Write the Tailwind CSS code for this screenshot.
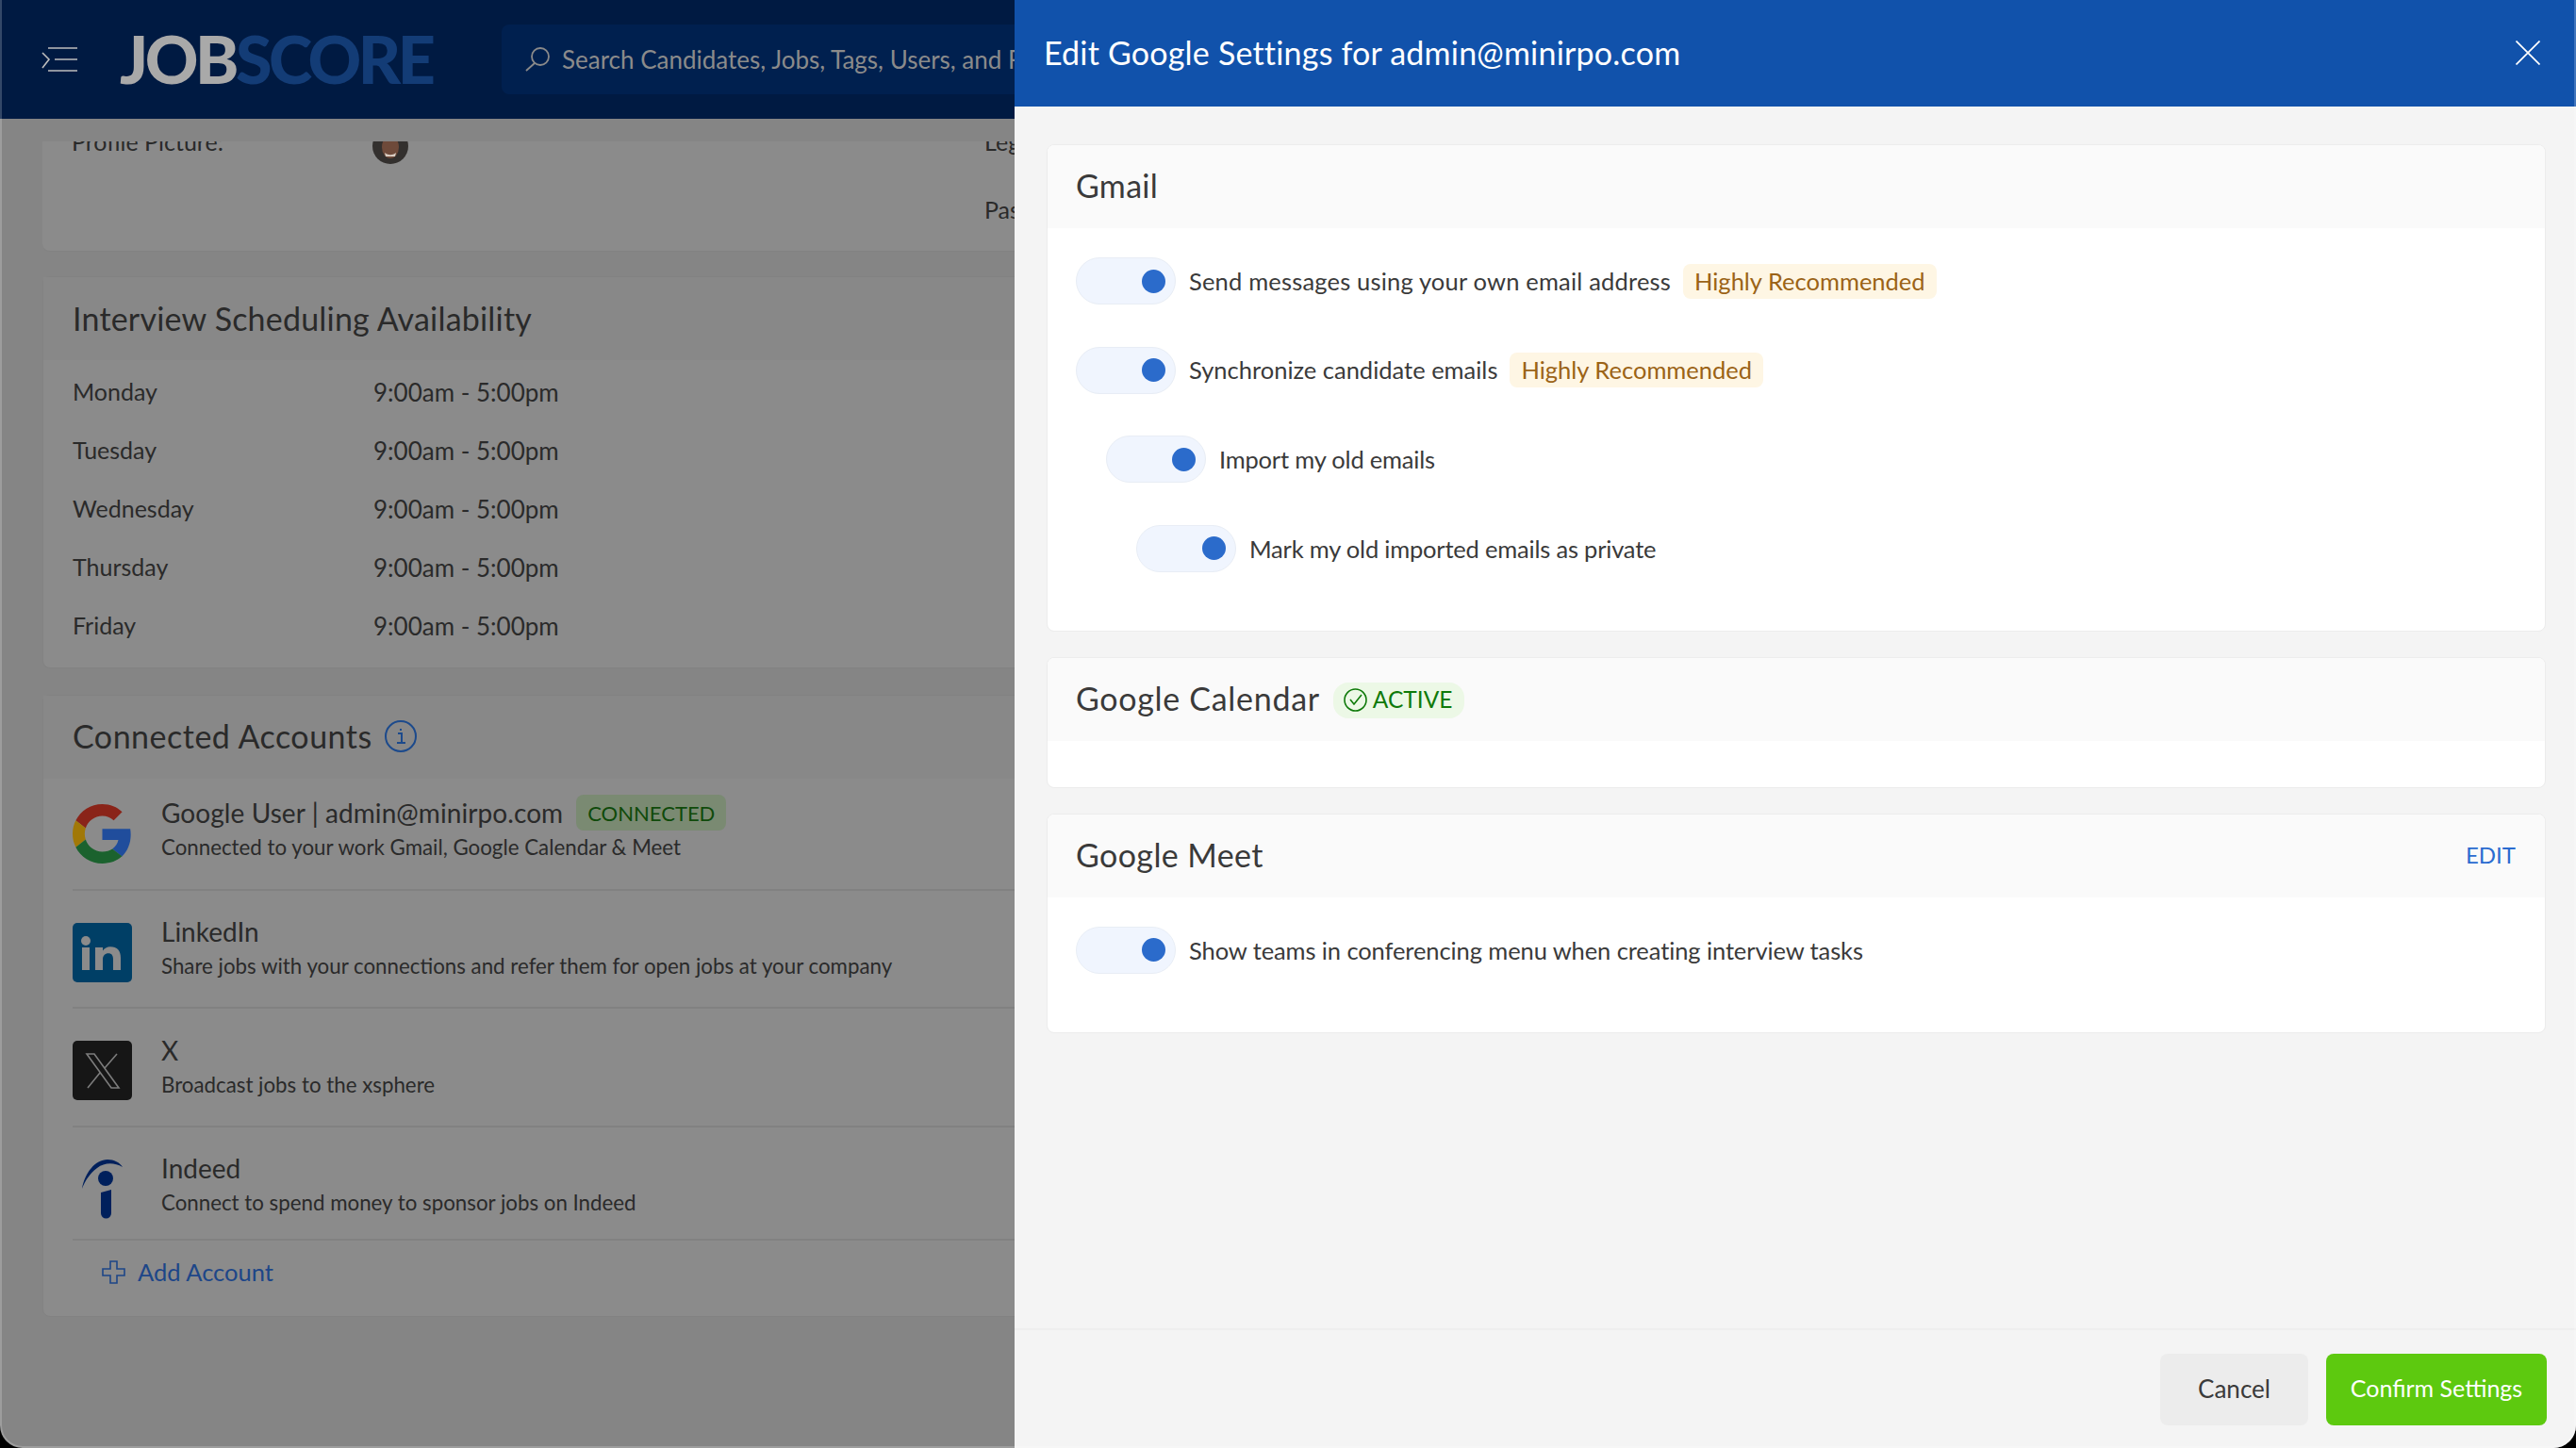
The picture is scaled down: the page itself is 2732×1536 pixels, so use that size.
<!DOCTYPE html>
<html lang="en">
<head>
  <meta charset="UTF-8" />
  <title>JobScore - Edit Google Settings</title>
  <script src="https://cdn.jsdelivr.net/npm/@tailwindcss/browser@4"></script>
</head>
<body class="bg-black font-['Lato',sans-serif]">
<div class="relative w-[2732px] h-[1536px] overflow-hidden rounded-b-[24px] bg-[#858585] text-[#2a2a2a]">

  <!-- page behind the drawer -->
  <header class="h-[126px] bg-[#001a42] flex items-center">
    <button class="ml-[44px] w-[38px]">
      <svg class="w-[38px] h-[26px] block" viewBox="0 0 38 26" fill="none" stroke="#bdbdbd" stroke-width="1.600"><path d="M7 1h31M14 13h24M7 25h31M1 6l7 7-7 9"/></svg>
    </button>
    <div class="ml-[45px] -mt-[2px] w-[360px] text-[70px] leading-none font-black tracking-[-3.500px]"><span class="text-[#a9a9a9]">JOB</span><span class="text-[#133c76]">SCORE</span></div>
    <div class="ml-[45px] h-[74px] w-[1400px] rounded-lg bg-[#00204f] flex items-center pl-[25px] gap-[13px]">
      <svg class="w-[26px] h-[26px]" viewBox="0 0 26 26" fill="none" stroke="#8a8a8a" stroke-width="1.800"><circle cx="16" cy="10" r="9"/><path d="M10 17 1 25"/></svg>
      <span class="text-[26px] text-[#8b8b8b]">Search Candidates, Jobs, Tags, Users, and Folders</span>
    </div>
  </header>

  <main class="pt-[24px] px-[45px] flex flex-col gap-[26px]">
    <section class="h-[117px] bg-[#8b8b8b] rounded-b-lg overflow-hidden border-b border-[#828282] px-[31px] relative">
      <div class="-mt-[19px] flex items-center text-[25px] h-[40px]">
        <span class="w-[319px]">Profile Picture:</span>
        <svg class="w-[38px] h-[38px] mt-[8px]" viewBox="0 0 38 38">
          <circle cx="19" cy="19" r="19" fill="#33302e"/>
          <ellipse cx="19" cy="20" rx="9" ry="12" fill="#6e4a3a"/>
          <path d="M13 26c4 3 8 3 12 0l-1 4h-10z" fill="#d8ccc2"/>
        </svg>
        <span class="ml-[611px]">Legal Name:</span>
      </div>
      <div class="mt-[33px] ml-[968px] text-[25px]">Password:</div>
    </section>

    <section class="h-[416px] bg-[#8b8b8b] rounded-lg border border-[#828282]">
      <h2 class="h-[88px] bg-[#888888] px-[31px] pb-[2px] flex items-center text-[34px] tracking-[0.2px]">Interview Scheduling Availability</h2>
      <dl class="px-[31px] pt-[3px] text-[25px]">
        <div class="flex h-[62px] items-center"><dt class="w-[319px]">Monday</dt><dd class="text-[26px]">9:00am - 5:00pm</dd></div>
        <div class="flex h-[62px] items-center"><dt class="w-[319px]">Tuesday</dt><dd class="text-[26px]">9:00am - 5:00pm</dd></div>
        <div class="flex h-[62px] items-center"><dt class="w-[319px]">Wednesday</dt><dd class="text-[26px]">9:00am - 5:00pm</dd></div>
        <div class="flex h-[62px] items-center"><dt class="w-[319px]">Thursday</dt><dd class="text-[26px]">9:00am - 5:00pm</dd></div>
        <div class="flex h-[62px] items-center"><dt class="w-[319px]">Friday</dt><dd class="text-[26px]">9:00am - 5:00pm</dd></div>
      </dl>
    </section>

    <section class="mt-[2px] h-[660px] bg-[#8b8b8b] rounded-lg border border-[#828282]">
      <h2 class="h-[88px] bg-[#888888] px-[31px] pb-[3px] flex items-center gap-[13px] text-[34px] tracking-[0.5px]">
        Connected Accounts
        <svg class="w-[34px] h-[34px]" viewBox="0 0 34 34" fill="none" stroke="#1c4a8c" stroke-width="2"><circle cx="17" cy="17" r="16"/><path d="M14 14h4v10M13 24h9M17 9v2"/></svg>
      </h2>
      <div class="px-[31px]">
        <div class="h-[119px] border-b-2 border-[#818181] flex items-center gap-[31px]">
          <svg class="w-[63px] h-[63px] shrink-0" viewBox="0 0 48 48">
            <path fill="#8a2419" d="M24 9.500c3.540 0 6.710 1.220 9.210 3.600l6.850-6.850C35.900 2.380 30.470 0 24 0 14.620 0 6.510 5.380 2.560 13.220l7.980 6.190C12.430 13.720 17.740 9.500 24 9.500z"/>
            <path fill="#204d9c" d="M46.980 24.550c0-1.570-.15-3.090-.38-4.550H24v9.020h12.940c-.58 2.960-2.260 5.480-4.780 7.180l7.730 6c4.510-4.180 7.090-10.360 7.090-17.650z"/>
            <path fill="#a17807" d="M10.530 28.590c-.48-1.450-.76-2.990-.76-4.590s.27-3.140.76-4.590l-7.980-6.190C.92 16.460 0 20.120 0 24c0 3.880.92 7.540 2.560 10.780l7.970-6.190z"/>
            <path fill="#1b622e" d="M24 48c6.480 0 11.930-2.130 15.890-5.810l-7.730-6c-2.150 1.450-4.920 2.300-8.160 2.300-6.260 0-11.570-4.220-13.470-9.910l-7.980 6.190C6.510 42.620 14.620 48 24 48z"/>
          </svg>
          <div class="mb-[10px]">
            <div class="flex items-center gap-[14px] text-[28px] h-[38px]"><span class="tracking-[0.08px]">Google User | admin@minirpo.com</span> <span class="h-[38px] px-[12px] rounded-lg bg-[#7a8a72] text-[#0f4a0a] text-[22px] flex items-center">CONNECTED</span></div>
            <p class="mt-[1px] text-[22.300px]">Connected to your work Gmail, Google Calendar &amp; Meet</p>
          </div>
        </div>
        <div class="h-[125px] border-b-2 border-[#818181] flex items-center gap-[31px]">
          <svg class="w-[63px] h-[63px] shrink-0 mt-[8px]" viewBox="0 0 63 63">
            <rect width="63" height="63" rx="5" fill="#003f66"/>
            <circle cx="14" cy="19" r="5" fill="#8b8b8b"/>
            <path fill="#8b8b8b" d="M10 26h8v24h-8zM24 26h8v3.500c1.600-2.600 4.600-4.200 8-4.200 7.400 0 11 4.300 11 11.700v13h-8V38.500c0-4.300-1.800-6.300-5-6.300-3.600 0-6 2.400-6 6.600V50h-8z"/>
          </svg>
          <div class="mb-[3px]">
            <div class="text-[28px] h-[38px] flex items-center">LinkedIn</div>
            <p class="mt-[1px] text-[22.300px]">Share jobs with your connections and refer them for open jobs at your company</p>
          </div>
        </div>
        <div class="h-[126px] border-b-2 border-[#818181] flex items-center gap-[31px]">
          <svg class="w-[63px] h-[63px] shrink-0 mt-[7px]" viewBox="0 0 63 63">
            <rect width="63" height="63" rx="5" fill="#161616"/>
            <g transform="translate(14 13)" fill="none" stroke="#7c7c7c" stroke-width="1.600">
              <path d="M1 1h8l26 36h-8zM33 1 20 16M15 21 2 37"/>
            </g>
          </svg>
          <div class="mb-[2px]">
            <div class="text-[28px] h-[38px] flex items-center">X</div>
            <p class="mt-[1px] text-[22.300px]">Broadcast jobs to the xsphere</p>
          </div>
        </div>
        <div class="h-[120px] border-b-2 border-[#818181] flex items-center gap-[31px]">
          <span class="w-[63px] h-[63px] shrink-0 flex justify-center mt-[12px]">
            <svg class="w-[43px] h-[63px]" viewBox="0 0 43 63" fill="#00205c">
              <path d="M0 31C3 14 14 0 27 0c7 0 13 3 16 8-9-5-19-5-27 1C8 15 3 23 0 31z"/>
              <circle cx="25" cy="20" r="8"/>
              <path d="M20 35l11-3v25a5.500 5.500 0 0 1-11 0z"/>
            </svg>
          </span>
          <div class="mt-[2px]">
            <div class="text-[28px] h-[38px] flex items-center">Indeed</div>
            <p class="mt-[1px] text-[22.300px]">Connect to spend money to sponsor jobs on Indeed</p>
          </div>
        </div>
        <a class="h-[67px] pl-[31px] flex items-center gap-[13px] text-[25.500px] text-[#1d4688]">
          <svg class="w-[25px] h-[25px]" viewBox="0 0 25 25" fill="none" stroke="#1d4688" stroke-width="1.600"><path d="M9 1h7v8h8v7h-8v8H9v-8H1V9h8z"/></svg>
          Add Account
        </a>
      </div>
    </section>
  </main>

  <!-- drawer -->
  <aside class="absolute top-0 right-0 bottom-0 w-[1656px] bg-[#f4f4f4] flex flex-col text-[#3a3a3a]">
    <div class="h-[113px] shrink-0 bg-[#1152ab] text-white pl-[31px] pr-[38px] flex items-center justify-between">
      <h1 class="text-[34px] tracking-[0.2px] -mt-[2px]">Edit Google Settings for admin@minirpo.com</h1>
      <svg class="w-[26px] h-[26px] -mt-[2px]" viewBox="0 0 26 26" fill="none" stroke="#fff" stroke-width="1.700"><path d="M0.500 0.500l25 25M25.500 0.500l-25 25"/></svg>
    </div>

    <div class="flex-1 pt-[40px] pl-[34px] pr-[32px] flex flex-col gap-[27px]">
      <section class="rounded-lg border border-[#ececec] bg-white overflow-hidden">
        <h2 class="h-[88px] bg-[#fafafa] px-[30px] pb-[3px] flex items-center text-[34px] tracking-[0.3px]">Gmail</h2>
        <div class="pt-[31px] pb-[62px] px-[30px] flex flex-col gap-[44.600px] text-[25.500px]">
          <div class="flex items-center">
            <span class="w-[106px] h-[50px] rounded-full bg-[#f0f5fe] border border-[#e8edf5] flex items-center justify-end pr-[10px]"><i class="block w-[25px] h-[25px] rounded-full bg-[#2b6bcb]"></i></span>
            <span class="ml-[14px] tracking-[0.18px]">Send messages using your own email address</span>
            <span class="ml-[13px] h-[37px] px-[12px] rounded-lg bg-[#fef6e4] text-[#9b6316] flex items-center">Highly Recommended</span>
          </div>
          <div class="flex items-center">
            <span class="w-[106px] h-[50px] rounded-full bg-[#f0f5fe] border border-[#e8edf5] flex items-center justify-end pr-[10px]"><i class="block w-[25px] h-[25px] rounded-full bg-[#2b6bcb]"></i></span>
            <span class="ml-[14px]">Synchronize candidate emails</span>
            <span class="ml-[13px] h-[37px] px-[12px] rounded-lg bg-[#fef6e4] text-[#9b6316] flex items-center">Highly Recommended</span>
          </div>
          <div class="flex items-center pl-[32px]">
            <span class="w-[106px] h-[50px] rounded-full bg-[#f0f5fe] border border-[#e8edf5] flex items-center justify-end pr-[10px]"><i class="block w-[25px] h-[25px] rounded-full bg-[#2b6bcb]"></i></span>
            <span class="ml-[14px] tracking-[-0.2px]">Import my old emails</span>
          </div>
          <div class="flex items-center pl-[64px]">
            <span class="w-[106px] h-[50px] rounded-full bg-[#f0f5fe] border border-[#e8edf5] flex items-center justify-end pr-[10px]"><i class="block w-[25px] h-[25px] rounded-full bg-[#2b6bcb]"></i></span>
            <span class="ml-[14px] tracking-[-0.2px]">Mark my old imported emails as private</span>
          </div>
        </div>
      </section>

      <section class="rounded-lg border border-[#ececec] bg-white overflow-hidden">
        <div class="h-[88px] bg-[#fafafa] px-[30px] flex items-center gap-[14px]">
          <h2 class="text-[34px] tracking-[0.7px] -mt-[3px]">Google Calendar</h2>
          <span class="h-[38px] w-[139px] mt-[2px] pl-[11px] rounded-[16px] bg-[#ecf8e6] text-[#0f7a0a] text-[24.500px] flex items-center gap-[6px]">
            <svg class="w-[25px] h-[25px]" viewBox="0 0 25 25" fill="none" stroke="#0f7a0a" stroke-width="1.600"><circle cx="12.500" cy="12.500" r="11.500"/><path d="M7 12l4 5 8-10"/></svg>
            ACTIVE
          </span>
        </div>
        <div class="h-[49px]"></div>
      </section>

      <section class="rounded-lg border border-[#ececec] bg-white overflow-hidden">
        <div class="h-[88px] bg-[#fafafa] px-[30px] flex items-center justify-between">
          <h2 class="text-[34px] tracking-[0.4px] -mt-[3px]">Google Meet</h2>
          <a class="text-[24px] text-[#2a6bd0] mr-[1px] -mt-[2px]">EDIT</a>
        </div>
        <div class="pt-[31px] pb-[62px] px-[30px] flex items-center text-[25.500px]">
          <span class="w-[106px] h-[50px] rounded-full bg-[#f0f5fe] border border-[#e8edf5] flex items-center justify-end pr-[10px]"><i class="block w-[25px] h-[25px] rounded-full bg-[#2b6bcb]"></i></span>
          <span class="ml-[14px] tracking-[-0.1px]">Show teams in conferencing menu when creating interview tasks</span>
        </div>
      </section>
    </div>

    <footer class="h-[127px] shrink-0 border-t-2 border-[#eeeeee] flex justify-end gap-[19px] pt-[25px] pr-[31px] text-[26px]">
      <button class="w-[157px] h-[76px] rounded-lg bg-[#ececec] pb-[2px]">Cancel</button>
      <button class="w-[234px] h-[76px] rounded-lg bg-[#5dc90f] text-white text-[25px] pb-[2px]">Confirm Settings</button>
    </footer>
  </aside>

  <!-- window edge -->
  <div class="absolute inset-0 rounded-b-[24px] border-x-2 border-b-2 border-white/20 pointer-events-none"></div>
</div>
</body>
</html>
